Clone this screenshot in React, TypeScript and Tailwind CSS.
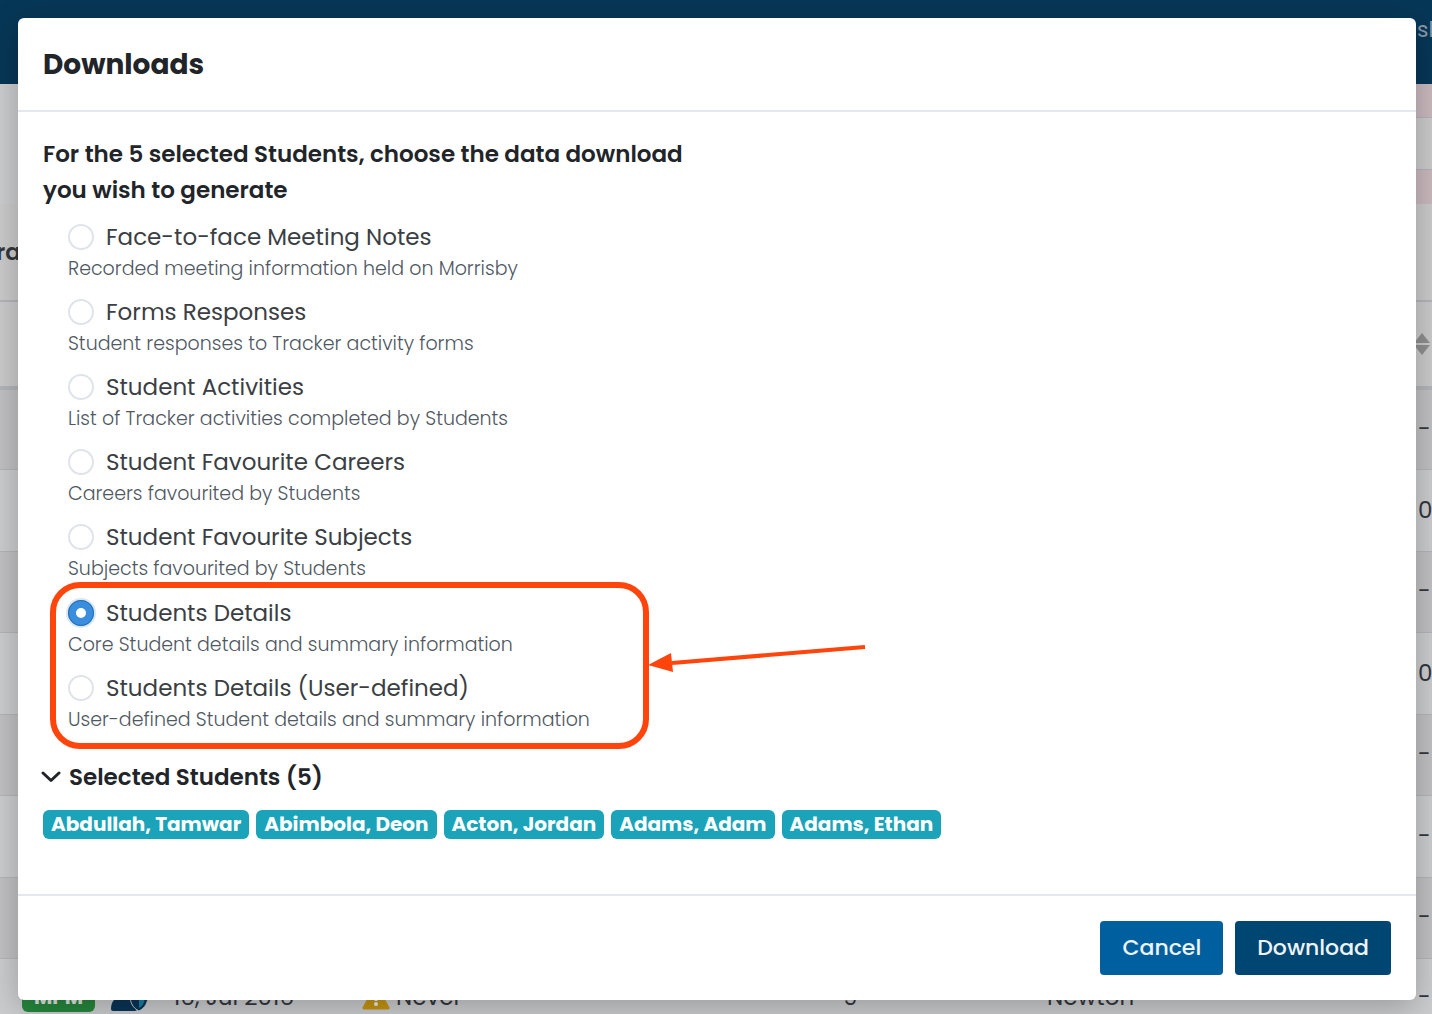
import React, { useState } from 'react';

interface DownloadOption {
  id: string;
  label: string;
  description: string;
}

const STANDARD_OPTIONS: DownloadOption[] = [
  { id: 'meeting-notes', label: 'Face-to-face Meeting Notes', description: 'Recorded meeting information held on Morrisby' },
  { id: 'forms', label: 'Forms Responses', description: 'Student responses to Tracker activity forms' },
  { id: 'activities', label: 'Student Activities', description: 'List of Tracker activities completed by Students' },
  { id: 'careers', label: 'Student Favourite Careers', description: 'Careers favourited by Students' },
  { id: 'subjects', label: 'Student Favourite Subjects', description: 'Subjects favourited by Students' },
];

const DETAIL_OPTIONS: DownloadOption[] = [
  { id: 'details', label: 'Students Details', description: 'Core Student details and summary information' },
  { id: 'details-user', label: 'Students Details (User-defined)', description: 'User-defined Student details and summary information' },
];

const STUDENTS = ['Abdullah, Tamwar', 'Abimbola, Deon', 'Acton, Jordan', 'Adams, Adam', 'Adams, Ethan'];

const ROW_VALUES = ['-', '0', '-', '0', '-', '-', '-'];

interface OptionProps {
  option: DownloadOption;
  selected: string;
  onSelect: (id: string) => void;
}

const Option: React.FC<OptionProps> = ({ option, selected, onSelect }) => (
  <div className="pb-[11px]">
    <div className="flex h-9 items-center gap-3">
      <input
        type="radio"
        name="download"
        id={option.id}
        aria-describedby={`${option.id}-help`}
        checked={selected === option.id}
        onChange={() => onSelect(option.id)}
        className="size-[26px] shrink-0 appearance-none rounded-full border-2 border-[#dfe4ea] bg-white checked:border-8 checked:border-[#3b8ede] checked:shadow-[0_0_0_2px_#dbe6ee] checked:outline-1 checked:-outline-offset-1 checked:outline-[#1f6fb5]"
      />
      <label htmlFor={option.id} className="text-[23px] text-[#3b3f44]">
        {option.label}
      </label>
    </div>
    <p id={`${option.id}-help`} className="text-[19px] leading-7 font-light text-[#4f5862]">
      {option.description}
    </p>
  </div>
);

// The page that stays dimmed behind the dialog
const Backdrop: React.FC = () => (
  <div aria-hidden="true" className="absolute inset-0 overflow-hidden bg-[#cccdcf] text-[23px] text-[#33373c]">
    <div className="flex h-[84px] justify-end bg-[#073757] pt-3">
      <span className="w-[15px] text-[22px] leading-9 text-[#8b9aa8]">sh</span>
    </div>
    <div className="flex h-[120px] justify-end">
      <div className="flex w-1/2 flex-col bg-[#cbcbcb]">
        <div className="h-[34px] border-b border-[#b1b3b8] bg-[#c9b9be]" />
        <div className="grow" />
        <div className="h-[35px] border-t border-[#b1b3b8] bg-[#c9b9be]" />
      </div>
    </div>
    <table className="w-full table-fixed border-collapse text-left">
      <colgroup>
        <col className="w-[161px]" />
        <col className="w-[189px]" />
        <col className="w-[481px]" />
        <col className="w-[204px]" />
        <col />
        <col className="w-[26px]" />
      </colgroup>
      <thead className="bg-[#cbcbcb]">
        <tr className="h-[97px] border-b-2 border-[#b3b5ba]">
          <th className="-indent-1 font-semibold">ra</th>
          <th colSpan={5} />
        </tr>
        <tr className="h-[87px] border-b-4 border-[#b3b5ba]">
          <th colSpan={5} />
          <th>
            <svg viewBox="0 0 14 24" className="ml-2 h-6 w-4" fill="#8f8f8f">
              <path d="M7 1l8 10H-1zM7 23l8-10H-1z" />
            </svg>
          </th>
        </tr>
      </thead>
      <tbody>
        {ROW_VALUES.map((value, i) => (
          <tr key={i} className="h-[81px] border-b border-[#b3b5ba] odd:bg-[#c1c1c3] even:h-[82px]">
            <td colSpan={5} />
            <td className="pl-3">{value}</td>
          </tr>
        ))}
        <tr className="h-[78px]">
          <td className="pl-[22px]">
            <div className="flex items-center gap-4">
              <span className="rounded-md bg-[#26883d] px-3 text-[20px] leading-[30px] font-bold text-[#dfe6df]">MPM</span>
              <svg viewBox="0 0 37 30" className="h-[30px] w-[37px] shrink-0">
                <circle cx="13" cy="8" r="7" fill="#0a3557" />
                <path d="M0 27c0-8 4-12 12-12s14 4 14 12c0 1-1 2-2 2H2c-1 0-2-1-2-2z" fill="#0a3557" />
                <path d="M19 13l9-4 9 4c0 8-3 13-9 16-6-3-9-8-9-16z" fill="#0a3557" stroke="#cccdcf" strokeWidth="1" />
                <path d="M28 12v14c4-2 6-7 6-12z" fill="#1583a5" />
              </svg>
            </div>
          </td>
          <td className="pl-3">16, Jul 2016</td>
          <td className="pl-3">
            <div className="flex items-center gap-1.5">
              <svg viewBox="0 0 28 26" className="h-[26px] w-7">
                <path d="M14 2l12 22H2z" fill="#c79612" stroke="#c79612" strokeWidth="3" strokeLinejoin="round" />
                <path d="M14 9v8" stroke="#eee" strokeWidth="3" />
                <circle cx="14" cy="20" r="2" fill="#eee" />
              </svg>
              Never
            </div>
          </td>
          <td className="pl-3">9</td>
          <td className="pl-3">Newton</td>
          <td className="pl-3">-</td>
        </tr>
      </tbody>
    </table>
  </div>
);

export default function App() {
  const [selected, setSelected] = useState('details');

  return (
    <div className="relative min-h-screen overflow-hidden pt-[18px] pr-4 pb-[13px] pl-[18px] font-['Poppins','Inter',sans-serif]">
      <Backdrop />
      <div
        role="dialog"
        aria-labelledby="dialog-title"
        className="relative rounded-md bg-white text-[#212529] shadow-[0_8px_32px_rgba(0,0,0,0.25)]"
      >
        <header className="border-b-2 border-[#e4e8ec] px-[25px] pt-[29px] pb-[27px]">
          <h1 id="dialog-title" className="text-[28px] leading-9 font-bold">Downloads</h1>
        </header>

        <main className="px-[25px] pt-6 pb-[55px]">
          <fieldset>
            <legend className="max-w-[670px] text-[23px] leading-9 font-semibold">
              For the 5 selected Students, choose the data download you wish to generate
            </legend>
            <div className="pt-[11px] pl-[25px]">
              {STANDARD_OPTIONS.map((option) => (
                <Option key={option.id} option={option} selected={selected} onSelect={setSelected} />
              ))}
              <div className="relative pt-px">
                {DETAIL_OPTIONS.map((option) => (
                  <Option key={option.id} option={option} selected={selected} onSelect={setSelected} />
                ))}
                {/* Callout around the two detail downloads */}
                <div className="pointer-events-none absolute -top-3 -left-[18px] h-[167px] w-[599px] rounded-[30px] border-6 border-[#ff440c]" />
                <svg viewBox="0 0 220 36" className="absolute top-12 left-[580px] h-9 w-[220px]" fill="#ff440c">
                  <path d="M217 5L24 21" stroke="#ff440c" strokeWidth="4" />
                  <path d="M0 23L23 11L25 30z" />
                </svg>
              </div>
            </div>
          </fieldset>

          <button type="button" aria-expanded="true" className="mt-[14px] flex items-center gap-2 text-[23px] leading-9 font-semibold">
            <svg viewBox="0 0 20 12" className="-ml-0.5 h-3 w-5" fill="none" stroke="currentColor" strokeWidth="3" strokeLinecap="round" strokeLinejoin="round">
              <path d="M2 2l8 7.500l8-7.500" />
            </svg>
            Selected Students (5)
          </button>
          <ul className="mt-[15px] flex flex-wrap gap-[7px]">
            {STUDENTS.map((name) => (
              <li key={name} className="rounded-md bg-[#1aa3b9] px-2 text-[20px] leading-[29px] font-bold text-white">
                {name}
              </li>
            ))}
          </ul>
        </main>

        <footer className="flex justify-end gap-3 border-t-2 border-[#e4e8ec] px-[25px] py-[25px]">
          <button type="button" className="rounded bg-[#00609f] px-[22px] py-2 text-[22px] leading-[38px] font-medium text-[#eef3f7]">
            Cancel
          </button>
          <button type="button" className="rounded bg-[#004672] px-[22px] py-2 text-[22px] leading-[38px] font-medium text-[#eef3f7]">
            Download
          </button>
        </footer>
      </div>
    </div>
  );
}
